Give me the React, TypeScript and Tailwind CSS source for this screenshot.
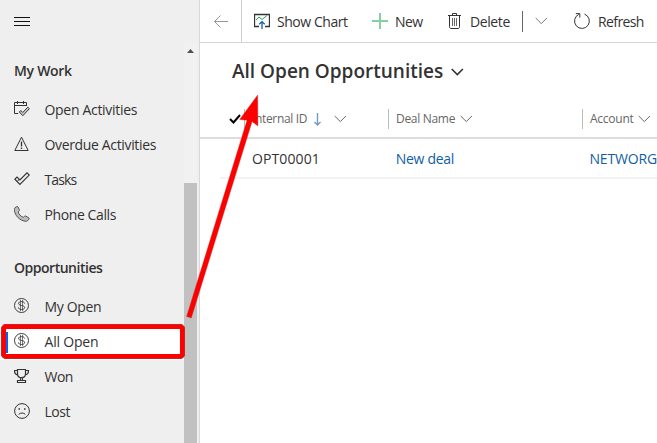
import type { ReactNode } from "react";

type IconProps = { children: ReactNode; className?: string };

function Icon({ children, className = "" }: IconProps) {
  return (
    <svg viewBox="0 0 16 16" width="16" height="16" fill="none" stroke="#333" strokeWidth="1" className={"shrink-0 " + className}>
      {children}
    </svg>
  );
}

function CalendarCheck() {
  return (
    <Icon>
      <path d="M12.5 5V1.5H.5v11h3.700M.5 4.500h12M3.500 0v3M9.500 0v3" />
      <path d="m5.300 11 1.500-1.500 2 2 5-5.300 1.600 1.500-6.600 7z" fill="#ccc" />
    </Icon>
  );
}

function Warning() {
  return (
    <Icon>
      <path d="M7.500 1.200.8 14.500h13.400z" />
      <path d="M7.500 5.500v5M7.500 11.500v1.400" strokeWidth="1.300" />
    </Icon>
  );
}

function Check() {
  return (
    <Icon>
      <path d="m.9 8.200 2.100-2.100 2.900 2.900L13 1.900l2.200 2.200-9.300 9.300z" strokeWidth="1.150" />
      <path d="m3.200 10.400 2.500-2.500" />
    </Icon>
  );
}

function Phone() {
  return (
    <Icon>
      <path
        d="M1 1.700 2.800.6c.6-.3 1 0 1.200.4l1.400 2.800c.2.500.1.900-.3 1.200l-.9.800c.4 2.400 2.300 4.600 5.200 5.500l1.100-1c.4-.4.8-.4 1.200-.2l3 1.600c.5.300.6.7.4 1.200-.9 1.700-2.200 2.600-4 2.300C5.500 14.500.8 9.300.4 4.200.3 3 .4 2.200 1 1.700z"
        fill="#bdbdbd"
        stroke="#555"
      />
    </Icon>
  );
}

function Dollar() {
  return (
    <Icon>
      <circle cx="7.500" cy="7.500" r="7" strokeWidth=".95" />
      <path d="M10.500 5.500C10.300 4.200 9.200 3.600 7.500 3.600S4.600 4.300 4.600 5.500c0 2.600 6 1.400 6 4 0 1.300-1.400 2-3.100 2s-3-.8-3.100-2.100" strokeWidth=".95" />
      <path d="M6.500 2v11M8.500 2v11" strokeWidth=".65" />
    </Icon>
  );
}

function Trophy() {
  return (
    <Icon>
      <path d="M3.500 1.500h8v4.200c0 2.500-1.700 3.900-4 3.900s-4-1.400-4-3.900zM3.500 2.500h-3c0 2.700 1 4.200 3.500 4.200M11.500 2.500h3c0 2.700-1 4.200-3.500 4.200M6.500 9.500v3M8.500 9.500v3M3.500 14.500v-2h8v2z" strokeWidth="1.200" />
    </Icon>
  );
}

function Sad() {
  return (
    <Icon>
      <circle cx="8" cy="8" r="7.400" />
      <path d="M4.700 11.300c1.800-1.700 4.800-1.700 6.600 0" />
      <path d="M4.500 6h1.500M10 6h1.500" strokeWidth="1.500" />
    </Icon>
  );
}

function Chevron({ className = "" }: { className?: string }) {
  return (
    <svg viewBox="0 0 13 8" width="13" height="8" fill="none" stroke="currentColor" className={"shrink-0 " + className}>
      <path d="m.7 1 5.600 5.600L11.900 1" />
    </svg>
  );
}

type ItemProps = { icon: ReactNode; label: string; spacing: string; active?: boolean };

function NavItem({ icon, label, spacing, active }: ItemProps) {
  return (
    <div className={"relative flex h-[35px] items-center pl-[14px] " + (active ? "bg-white" : "")}>
      {active && <span className="absolute left-[5px] top-[7px] h-[21px] w-[3px] bg-[#0064ff]" />}
      <span className="-mt-1 w-[30.500px]">{icon}</span>
      <span className={"-mt-px whitespace-nowrap text-[14px] leading-5 " + spacing}>{label}</span>
    </div>
  );
}

function Sidebar() {
  return (
    <aside className="flex h-full w-[200px] shrink-0 border-r border-[#d8d8d8] bg-[#efefef]">
      <div className="w-[184px]">
        <svg className="ml-[14px] mt-[16px]" width="16" height="11" stroke="#111" strokeWidth="1">
          <path d="M0 1.500h16M0 5.500h16M0 9.500h16" />
        </svg>
        <h2 className="ml-[14px] mt-[34px] h-5 whitespace-nowrap text-[14px] font-semibold leading-5 tracking-[-0.3px]">My Work</h2>
        <nav className="mt-[12px]">
          <NavItem icon={<CalendarCheck />} label="Open Activities" spacing="tracking-[-0.31px]" />
          <NavItem icon={<Warning />} label="Overdue Activities" spacing="tracking-[-0.35px]" />
          <NavItem icon={<Check />} label="Tasks" spacing="tracking-[-0.9px]" />
          <NavItem icon={<Phone />} label="Phone Calls" spacing="tracking-[-0.4px]" />
        </nav>
        <h2 className="ml-[14px] mt-[25px] h-5 whitespace-nowrap text-[14px] font-semibold leading-5 tracking-[-0.48px]">Opportunities</h2>
        <nav className="mt-[12px]">
          <NavItem icon={<Dollar />} label="My Open" spacing="tracking-[-0.35px]" />
          <NavItem icon={<Dollar />} label="All Open" spacing="tracking-[-0.2px]" active />
          <NavItem icon={<Trophy />} label="Won" spacing="tracking-[-0.5px]" />
          <NavItem icon={<Sad />} label="Lost" spacing="tracking-[-0.5px]" />
        </nav>
      </div>
      <div className="mt-[42px] flex w-[13px] flex-col bg-[#f1f1f1]">
        <svg width="13" height="17" fill="#505050">
          <path d="M3 11h7l-3.500-4z" />
        </svg>
        <div className="mt-[124px] flex-1 bg-[#c1c1c1]" />
      </div>
    </aside>
  );
}

function Toolbar() {
  return (
    <header className="flex h-[43px] items-center border-b border-[#d4d4d4] text-[14px] leading-5">
      <div className="flex h-full w-[42px] items-center border-r border-[#d0d0d0] pl-[14px]">
        <svg width="14" height="13" fill="none" stroke="#999">
          <path d="M0 6.500h14M6.500.5l-6 6 6 6" />
        </svg>
      </div>
      <div className="flex w-[118px] items-center pl-[12px]">
        <Icon>
          <path d="M5 13.500H.5v-12h15v12H11" strokeWidth="1.300" />
          <path d="m2 7 3-3 3 2.500 5.500-4.500" stroke="#22a45a" />
          <path d="M8 16V8.700M5.300 11.300 8 8.600l2.700 2.700" stroke="#1160b7" strokeWidth="1.300" />
        </Icon>
        <span className="ml-[7px] mt-px whitespace-nowrap tracking-[-0.45px]">Show Chart</span>
      </div>
      <div className="flex w-[76px] items-center pl-[12px]">
        <Icon>
          <path d="M8 0v16M0 8h16" stroke="#87cfa4" strokeWidth="2" />
        </Icon>
        <span className="ml-[7px] mt-px whitespace-nowrap tracking-[-0.6px]">New</span>
      </div>
      <div className="flex w-[86px] items-center pl-[11px]">
        <Icon>
          <path d="M2.500 2.500v11.200c0 1 .5 1.800 1.500 1.800h7c1 0 1.500-.8 1.500-1.800V2.500M1 2.500h13M5.500 2.500V.5h4v2" />
          <path d="M5.500 5v8M7.500 5v8M9.500 5v8" stroke="#666" />
        </Icon>
        <span className="ml-[7px] mt-px whitespace-nowrap tracking-[-0.4px]">Delete</span>
      </div>
      <div className="flex h-[21px] w-[52px] items-center border-l border-[#666] pl-[12px] text-[#777]">
        <Chevron />
      </div>
      <Icon className="-mt-px">
        <path d="M10.500 1.100A7.400 7.400 0 1 1 4.700 1.400M1.800.6h4v4" />
      </Icon>
      <span className="ml-[8px] mt-px whitespace-nowrap tracking-[-0.6px]">Refresh</span>
    </header>
  );
}

function Grid() {
  return (
    <section>
      <div className="flex h-[38px] items-center border-b-2 border-[#ddd] text-[12px] leading-4 text-[#666]">
        <svg className="ml-[29px] shrink-0" width="12" height="10" fill="none" stroke="#000" strokeWidth="2">
          <path d="m1 5 3.500 3.500L11 1" />
        </svg>
        <div className="ml-[3px] flex h-5 w-[144px] items-center border-l border-[#bbb] pl-[7px]">
          <span className="w-[62px] whitespace-nowrap tracking-[-0.35px]">Internal ID</span>
          <svg width="8" height="13" fill="none" stroke="#769bbd" strokeWidth="1.400">
            <path d="M3.500 0v12M.5 9l3 3 3-3" />
          </svg>
          <Chevron className="ml-[12px]" />
        </div>
        <div className="flex h-5 w-[194px] items-center border-l border-[#bbb] pl-[7px]">
          <span className="w-[64px] whitespace-nowrap tracking-[-0.3px]">Deal Name</span>
          <Chevron />
        </div>
        <div className="flex h-5 flex-1 items-center border-l border-[#bbb] pl-[7px]">
          <span className="w-[48px] whitespace-nowrap tracking-[-0.25px]">Account</span>
          <Chevron />
        </div>
      </div>
      <div className="ml-5 flex h-[40px] items-center border-b-2 border-[#f3f3f3] pl-8 pt-px text-[14px] leading-5">
        <span className="w-[144px] whitespace-nowrap tracking-[0.1px]">OPT00001</span>
        <span className="w-[194px] whitespace-nowrap tracking-[-0.3px] text-[#115ea3]">New deal</span>
        <span className="whitespace-nowrap tracking-[-0.15px] text-[#115ea3]">NETWORG</span>
      </div>
    </section>
  );
}

export default function App() {
  return (
    <div className="relative flex h-[443px] w-[657px] overflow-hidden bg-white font-['Open_Sans','Noto_Sans',sans-serif] text-[#333]">
      <Sidebar />
      <main className="min-w-0 flex-1 overflow-hidden">
        <Toolbar />
        <div className="flex h-[58px] items-center pl-[32px]">
          <h1 className="-mt-[3px] w-[219px] whitespace-nowrap text-[19px] font-semibold leading-6">All Open Opportunities</h1>
          <Chevron className="-mt-px stroke-[1.6]" />
        </div>
        <Grid />
      </main>
      <div className="absolute left-px top-[324px] h-[35px] w-[184px] rounded-[5px] border-[5px] border-[#f00] outline outline-1 -outline-offset-1 outline-[#c22]" />
      <svg className="pointer-events-none absolute inset-0" width="657" height="443">
        <path d="m186.600 316.500 60.400-196.200-7.300-.8 18-24.500.2 31-5.800-4.500-60.800 196.500z" fill="#f00" stroke="#b33" strokeWidth=".4" />
      </svg>
    </div>
  );
}
